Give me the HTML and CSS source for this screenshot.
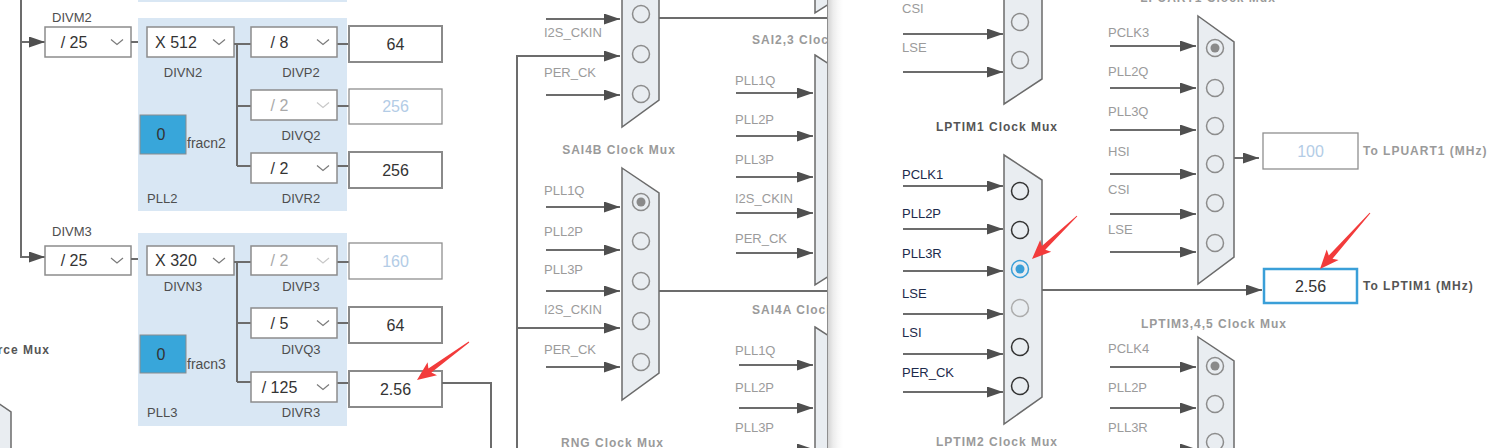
FILE: index.html
```html
<!DOCTYPE html>
<html>
<head>
<meta charset="utf-8">
<title>Clock Configuration</title>
<link rel="stylesheet" href="styles.css">
</head>
<body>
<div class="stage">
  <section class="panel panel-left">
    <svg class="canvas" width="828" height="448" viewBox="0 0 828 448">
      <defs>
        <marker id="ah" viewBox="0 0 16 11" refX="16" refY="5.5" markerWidth="16" markerHeight="11" markerUnits="userSpaceOnUse" orient="auto">
          <path d="M0 0L16 5.5L0 11Z" class="head"/>
        </marker>
      </defs>

      <!-- PLL1 remnant -->
      <rect class="pll" x="138" y="-10" width="209" height="12"/>

      <!-- source feed -->
      <path class="wire arr" d="M21 -5V257H45"/>
      <path class="wire arr" d="M21 42H45"/>

      <!-- PLL2 -->
      <text class="lbl" x="52" y="17">DIVM2</text>
      <rect class="box" x="45" y="27" width="86" height="30"/>
      <text class="sel" x="74" y="42">/ 25</text>
      <path class="chev" d="M111 39.5l6 5 6-5"/>
      <path class="wire" d="M131 42H147"/>

      <rect class="pll" x="138" y="18" width="209" height="193"/>
      <rect class="box" x="147" y="27" width="87" height="30"/>
      <text class="sel" x="176" y="42">X 512</text>
      <path class="chev" d="M213 39.5l6 5 6-5"/>
      <text class="lbl mid" x="183" y="72">DIVN2</text>

      <path class="wire" d="M234 44H251M237 44V166M237 106H251M237 166H251M337 44H349M337 106H349M337 166H349"/>

      <rect class="box" x="251" y="27" width="86" height="30"/>
      <text class="sel" x="279.5" y="42">/ 8</text>
      <path class="chev" d="M317 39.5l6 5 6-5"/>
      <text class="lbl mid" x="301" y="72">DIVP2</text>
      <rect class="vbox" x="349" y="26" width="93" height="36"/>
      <text class="val" x="395.5" y="44">64</text>

      <rect class="box" x="251" y="90" width="86" height="30"/>
      <text class="sel dis" x="279.5" y="105">/ 2</text>
      <path class="chev dis" d="M317 102.5l6 5 6-5"/>
      <text class="lbl mid" x="301" y="135">DIVQ2</text>
      <rect class="vbox dis" x="349" y="89" width="93" height="35"/>
      <text class="val dis" x="395.5" y="106">256</text>

      <rect class="frac" x="140" y="115" width="46" height="39"/>
      <text class="sel" x="161" y="134">0</text>
      <text class="frn" x="187" y="143">fracn2</text>

      <rect class="box" x="251" y="153" width="86" height="30"/>
      <text class="sel" x="279.5" y="168">/ 2</text>
      <path class="chev" d="M317 165.5l6 5 6-5"/>
      <rect class="vbox" x="349" y="152" width="93" height="36"/>
      <text class="val" x="395.5" y="170">256</text>
      <text class="lbl" x="147" y="198">PLL2</text>
      <text class="lbl mid" x="301" y="198">DIVR2</text>

      <!-- PLL3 -->
      <text class="lbl" x="52" y="231">DIVM3</text>
      <rect class="box" x="45" y="246" width="86" height="29"/>
      <text class="sel" x="74" y="260.5">/ 25</text>
      <path class="chev" d="M111 258l6 5 6-5"/>
      <path class="wire" d="M131 259H147"/>

      <rect class="pll" x="138" y="233" width="209" height="193"/>
      <rect class="box" x="147" y="246" width="87" height="29"/>
      <text class="sel" x="176" y="260.5">X 320</text>
      <path class="chev" d="M213 258l6 5 6-5"/>
      <text class="lbl mid" x="183" y="286">DIVN3</text>

      <path class="wire" d="M234 262H251M237 262V382M237 323H251M237 382H251M337 262H349M337 323H349M337 383H349"/>

      <rect class="box" x="251" y="246" width="86" height="29"/>
      <text class="sel dis" x="279.5" y="260.5">/ 2</text>
      <path class="chev dis" d="M317 258l6 5 6-5"/>
      <text class="lbl mid" x="301" y="286">DIVP3</text>
      <rect class="vbox dis" x="349" y="243" width="93" height="36"/>
      <text class="val dis" x="395.5" y="261">160</text>

      <rect class="box" x="251" y="308" width="86" height="30"/>
      <text class="sel" x="279.5" y="323">/ 5</text>
      <path class="chev" d="M317 320.5l6 5 6-5"/>
      <rect class="vbox" x="349" y="307" width="93" height="36"/>
      <text class="val" x="395.5" y="325">64</text>
      <text class="lbl mid" x="301" y="349">DIVQ3</text>

      <rect class="frac" x="140" y="335" width="46" height="38"/>
      <text class="sel" x="161" y="354">0</text>
      <text class="frn" x="187" y="364">fracn3</text>

      <rect class="box" x="251" y="372" width="86" height="30"/>
      <text class="sel" x="279.5" y="387">/ 125</text>
      <path class="chev" d="M317 384.5l6 5 6-5"/>
      <rect class="vbox" x="349" y="371" width="93" height="36"/>
      <text class="val" x="395.5" y="389">2.56</text>
      <text class="lbl" x="147" y="412">PLL3</text>
      <text class="lbl mid" x="301" y="412">DIVR3</text>

      <path class="wire" d="M442 383H491V450"/>

      <text class="ttl dark end" x="50" y="350">Source Mux</text>
      <path class="mux" d="M-2 403L11 412V452H-2Z"/>

      <!-- middle column -->
      <path class="wire arr" d="M517 450V56H620"/>
      <path class="wire arr" d="M517 328H620"/>

      <path class="mux" d="M622 -20H659V100L622 127Z"/>
      <circle class="rad" cx="641" cy="14" r="8.5"/>
      <circle class="rad" cx="641" cy="54" r="8.5"/>
      <circle class="rad" cx="641" cy="94" r="8.5"/>
      <path class="wire arr" d="M546 19H620"/>
      <path class="wire arr" d="M546 95H620"/>
      <text class="in" x="544" y="32">I2S_CKIN</text>
      <text class="in" x="544" y="72">PER_CK</text>
      <path class="wire" d="M659 18H828"/>

      <path class="mux" d="M815 -10V13L829 4V-10Z"/>
      <text class="ttl" x="752" y="40">SAI2,3 Clock Mux</text>
      <path class="mux" d="M815 55L829 64V276L815 285Z"/>
      <path class="wire arr" d="M736 93H813"/>
      <path class="wire arr" d="M736 136H813"/>
      <path class="wire arr" d="M736 177H813"/>
      <path class="wire arr" d="M736 213H813"/>
      <path class="wire arr" d="M736 253H813"/>
      <text class="in" x="735" y="80">PLL1Q</text>
      <text class="in" x="735" y="119">PLL2P</text>
      <text class="in" x="735" y="159">PLL3P</text>
      <text class="in" x="735" y="198">I2S_CKIN</text>
      <text class="in" x="735" y="238">PER_CK</text>

      <text class="ttl mid" x="619" y="150">SAI4B Clock Mux</text>
      <path class="mux" d="M622 168L659 193V373L622 400Z"/>
      <circle class="rad" cx="641" cy="202" r="8.5"/>
      <circle class="dot" cx="641" cy="202" r="4.5"/>
      <circle class="rad" cx="641" cy="241" r="8.5"/>
      <circle class="rad" cx="641" cy="281" r="8.5"/>
      <circle class="rad" cx="641" cy="321" r="8.5"/>
      <circle class="rad" cx="641" cy="362" r="8.5"/>
      <path class="wire arr" d="M546 207H620"/>
      <path class="wire arr" d="M546 250H620"/>
      <path class="wire arr" d="M546 291H620"/>
      <path class="wire arr" d="M546 367H620"/>
      <text class="in" x="544" y="190">PLL1Q</text>
      <text class="in" x="544" y="231">PLL2P</text>
      <text class="in" x="544" y="269">PLL3P</text>
      <text class="in" x="544" y="309">I2S_CKIN</text>
      <text class="in" x="544" y="349">PER_CK</text>
      <path class="wire" d="M659 291H828"/>

      <text class="ttl" x="752" y="310">SAI4A Clock Mux</text>
      <path class="mux" d="M815 327L829 336V460H815Z"/>
      <path class="wire arr" d="M739 365H813"/>
      <path class="wire arr" d="M739 408H813"/>
      <path class="wire arr" d="M739 449H813"/>
      <text class="in" x="735" y="350">PLL1Q</text>
      <text class="in" x="735" y="387">PLL2P</text>
      <text class="in" x="735" y="427">PLL3P</text>

      <text class="ttl" x="561" y="443">RNG Clock Mux</text>

      <polygon class="mark" points="469.3,342.4 431.4,372.6 437,375.3 417,380 427.6,362.3 428.4,368.6 468.7,341.6"/>

      <path class="edge" d="M827.5 0V448"/>
    </svg>
  </section>

  <section class="panel panel-right">
    <svg class="canvas" width="673" height="448" viewBox="828 0 673 448">
      <!-- top mux -->
      <path class="mux" d="M1004 -20H1042V79L1004 104Z"/>
      <circle class="rad" cx="1020" cy="22" r="8.5"/>
      <circle class="rad" cx="1020" cy="60" r="8.5"/>
      <path class="wire arr" d="M903 34H1003"/>
      <path class="wire arr" d="M903 72H1003"/>
      <text class="in" x="902" y="8">CSI</text>
      <text class="in" x="902" y="47">LSE</text>

      <!-- LPTIM1 -->
      <text class="ttl dark mid" x="997" y="127">LPTIM1 Clock Mux</text>
      <path class="mux" d="M1004 155L1042 180V397L1004 424Z"/>
      <circle class="rad dark" cx="1020" cy="191" r="8.5"/>
      <circle class="rad dark" cx="1020" cy="230" r="8.5"/>
      <circle class="rad blue" cx="1020" cy="269" r="8.5"/>
      <circle class="dot blue" cx="1020" cy="269" r="4.5"/>
      <circle class="rad light" cx="1020" cy="308" r="8.5"/>
      <circle class="rad dark" cx="1020" cy="347" r="8.5"/>
      <circle class="rad dark" cx="1020" cy="386" r="8.5"/>
      <path class="wire arr" d="M903 186H1003"/>
      <path class="wire arr" d="M903 229H1003"/>
      <path class="wire arr" d="M903 271H1003"/>
      <path class="wire arr" d="M903 314H1003"/>
      <path class="wire arr" d="M903 354H1003"/>
      <path class="wire arr" d="M903 392H1003"/>
      <text class="in dark" x="902" y="174">PCLK1</text>
      <text class="in dark" x="902" y="213">PLL2P</text>
      <text class="in dark" x="902" y="253">PLL3R</text>
      <text class="in dark" x="902" y="293">LSE</text>
      <text class="in dark" x="902" y="332">LSI</text>
      <text class="in dark" x="902" y="372">PER_CK</text>
      <path class="wire arr" d="M1042 290H1262"/>
      <text class="ttl mid" x="997" y="442">LPTIM2 Clock Mux</text>

      <!-- LPUART1 -->
      <text class="ttl mid" x="1208" y="-2">LPUART1 Clock Mux</text>
      <path class="mux" d="M1198 16L1234 42V257L1198 284Z"/>
      <circle class="rad" cx="1215" cy="48" r="8.5"/>
      <circle class="dot" cx="1215" cy="48" r="4.5"/>
      <circle class="rad" cx="1215" cy="88" r="8.5"/>
      <circle class="rad" cx="1215" cy="126" r="8.5"/>
      <circle class="rad" cx="1215" cy="164" r="8.5"/>
      <circle class="rad" cx="1215" cy="203" r="8.5"/>
      <circle class="rad" cx="1215" cy="243" r="8.5"/>
      <path class="wire arr" d="M1110 46H1196"/>
      <path class="wire arr" d="M1110 88H1196"/>
      <path class="wire arr" d="M1110 130H1196"/>
      <path class="wire arr" d="M1110 174H1196"/>
      <path class="wire arr" d="M1110 214H1196"/>
      <path class="wire arr" d="M1110 252H1196"/>
      <text class="in" x="1108" y="32">PCLK3</text>
      <text class="in" x="1108" y="71">PLL2Q</text>
      <text class="in" x="1108" y="111">PLL3Q</text>
      <text class="in" x="1108" y="151">HSI</text>
      <text class="in" x="1108" y="189">CSI</text>
      <text class="in" x="1108" y="229">LSE</text>
      <path class="wire arr" d="M1234 158H1259"/>
      <rect class="vbox dis" x="1263" y="133" width="95" height="36"/>
      <text class="val dis" x="1310.5" y="151">100</text>
      <text class="ttl" x="1363" y="151">To LPUART1 (MHz)</text>

      <rect class="vbox active" x="1264" y="269" width="93" height="34"/>
      <text class="val" x="1310.5" y="286">2.56</text>
      <text class="ttl dark" x="1363" y="286">To LPTIM1 (MHz)</text>

      <!-- LPTIM3,4,5 -->
      <text class="ttl mid" x="1214" y="324">LPTIM3,4,5 Clock Mux</text>
      <path class="mux" d="M1198 337L1234 361V460H1198Z"/>
      <circle class="rad" cx="1215" cy="366" r="8.5"/>
      <circle class="dot" cx="1215" cy="366" r="4.5"/>
      <circle class="rad" cx="1215" cy="404" r="8.5"/>
      <circle class="rad" cx="1215" cy="442" r="8.5"/>
      <path class="wire arr" d="M1110 367H1196"/>
      <path class="wire arr" d="M1110 408H1196"/>
      <path class="wire arr" d="M1110 449H1196"/>
      <text class="in" x="1108" y="348">PCLK4</text>
      <text class="in" x="1108" y="387">PLL2P</text>
      <text class="in" x="1108" y="427">PLL3R</text>

      <polygon class="mark" points="1077.35,216.36 1045.3,249.7 1051.2,251.7 1032,259 1040.2,240.1 1041.9,246.1 1076.65,215.64"/>
      <polygon class="mark" points="1370.4,213.3 1332.5,258.8 1338.6,260.1 1320,269 1326.7,249.5 1328.8,255.4 1369.6,212.7"/>
    </svg>
  </section>
</div>
</body>
</html>
```
FILE: styles.css
```css
html, body {
  margin: 0;
  padding: 0;
  background: #ffffff;
}

body {
  font-family: "Liberation Sans", Arial, sans-serif;
}

.stage {
  display: flex;
  width: 1501px;
  height: 448px;
  overflow: hidden;
}

.panel {
  flex: none;
  height: 448px;
  overflow: hidden;
}

.panel-left {
  width: 828px;
}

.panel-right {
  flex: 1 1 auto;
  background: linear-gradient(to right, #d4d4d4 0, #ececec 5px, #f8f8f8 10px, #ffffff 15px);
}

.canvas {
  display: block;
  overflow: hidden;
}

.canvas text {
  dominant-baseline: central;
  font-family: "Liberation Sans", Arial, sans-serif;
}

.head {
  fill: #4f4f4f;
}

.wire {
  fill: none;
  stroke: #6c6c6c;
  stroke-width: 2;
}

.arr {
  marker-end: url(#ah);
}

.edge {
  stroke: #8e8e8e;
  stroke-width: 1;
  fill: none;
}

.pll {
  fill: #d9e7f4;
}

.box {
  fill: #ffffff;
  stroke: #8c8c8c;
  stroke-width: 1.5;
}

.vbox {
  fill: #ffffff;
  stroke: #8a8a8a;
  stroke-width: 2;
}

.vbox.dis {
  stroke: #8f8f8f;
  stroke-width: 1.3;
}

.vbox.active {
  stroke: #3a9fd8;
  stroke-width: 2.5;
}

.chev {
  fill: none;
  stroke: #7a7a7a;
  stroke-width: 1.2;
}

.chev.dis {
  stroke: #c8c8c8;
}

.frac {
  fill: #38a6da;
  stroke: #8c8c8c;
  stroke-width: 1;
}

.lbl {
  font-size: 13px;
  fill: #4e4e4e;
}

.frn {
  font-size: 14px;
  fill: #4e4e4e;
}

.mid {
  text-anchor: middle;
}

.end {
  text-anchor: end;
}

.sel {
  font-size: 16px;
  fill: #333333;
  text-anchor: middle;
}

.sel.dis {
  fill: #a9a9a9;
}

.val {
  font-size: 16px;
  fill: #333333;
  text-anchor: middle;
}

.val.dis {
  fill: #b3cce6;
}

.in {
  font-size: 13px;
  fill: #9b9b9b;
}

.in.dark {
  fill: #1c2a4b;
}

.ttl {
  font-size: 12px;
  font-weight: bold;
  letter-spacing: 1px;
  fill: #9a9a9a;
}

.ttl.dark {
  fill: #555555;
}

.mux {
  fill: #e9edf1;
  stroke: #6b6b6b;
  stroke-width: 1.5;
}

.rad {
  fill: none;
  stroke: #8c8c8c;
  stroke-width: 1.5;
}

.rad.dark {
  stroke: #333333;
}

.rad.light {
  stroke: #acacac;
}

.rad.blue {
  stroke: #3a9fd8;
}

.dot {
  fill: #8a8a8a;
}

.dot.blue {
  fill: #3a9fd8;
}

.mark {
  fill: #f23b3b;
}
```
